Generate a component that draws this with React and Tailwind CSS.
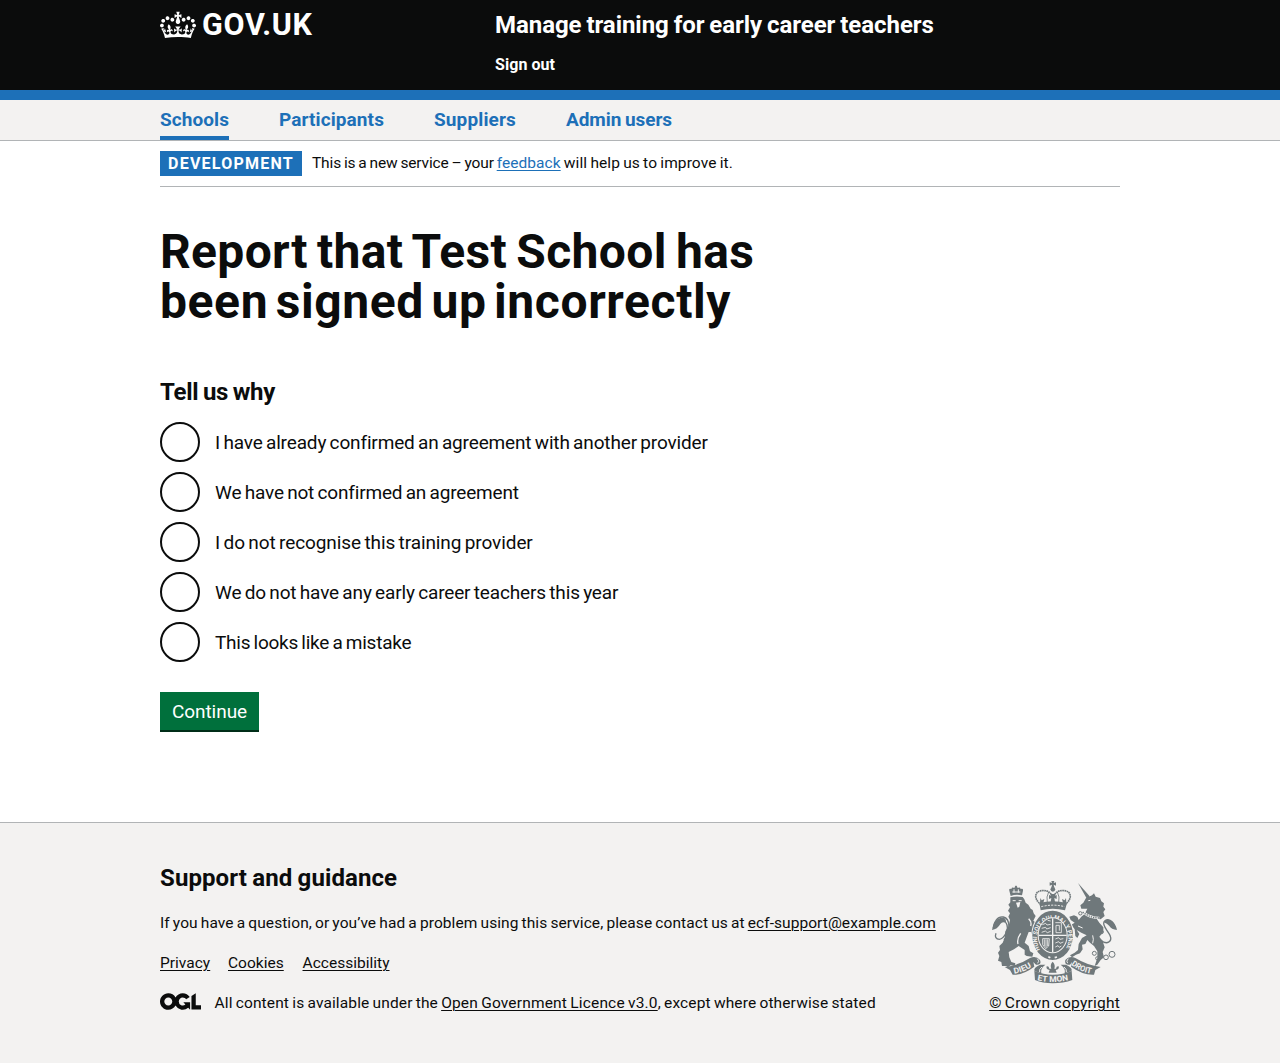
import React from "react";

function Crown() {
  return (
    <svg aria-hidden="true" viewBox="0 0 132 97" className="-mt-[2px] block h-[32px] w-[36px] shrink-0">
      <path
        fill="currentColor"
        fillRule="evenodd"
        d="M25 30.2c3.5 1.5 7.7-.2 9.1-3.7 1.5-3.6-.2-7.8-3.9-9.2-3.6-1.4-7.6.3-9.1 3.9-1.4 3.5.3 7.5 3.9 9zM9 39.5c3.6 1.5 7.8-.2 9.2-3.7 1.5-3.6-.2-7.8-3.9-9.1-3.6-1.5-7.6.2-9.1 3.8-1.4 3.5.3 7.5 3.8 9zM4.4 57.2c3.5 1.5 7.7-.2 9.1-3.8 1.5-3.6-.2-7.7-3.9-9.1-3.5-1.5-7.6.3-9.1 3.8-1.4 3.5.3 7.6 3.9 9.1zm38.3-21.4c3.5 1.5 7.7-.2 9.1-3.8 1.5-3.6-.2-7.7-3.9-9.1-3.6-1.5-7.6.3-9.1 3.8-1.3 3.6.4 7.7 3.9 9.1zm64.4-5.6c-3.6 1.5-7.8-.2-9.1-3.7-1.5-3.6.2-7.8 3.8-9.2 3.6-1.4 7.7.3 9.2 3.9 1.3 3.5-.4 7.5-3.9 9zm15.9 9.3c-3.6 1.5-7.7-.2-9.1-3.7-1.5-3.6.2-7.8 3.7-9.1 3.6-1.5 7.7.2 9.2 3.8 1.5 3.5-.3 7.5-3.8 9zm4.7 17.7c-3.6 1.5-7.8-.2-9.2-3.8-1.5-3.6.2-7.7 3.9-9.1 3.6-1.5 7.7.3 9.2 3.8 1.3 3.5-.4 7.6-3.9 9.1zM89.3 35.8c-3.6 1.5-7.8-.2-9.2-3.8-1.4-3.6.2-7.7 3.9-9.1 3.6-1.5 7.7.3 9.2 3.8 1.4 3.6-.3 7.7-3.9 9.1zM69.7 17.7l8.9 4.7V9.3l-8.9 2.8c-.2-.3-.5-.6-.9-.9L72.4 0H59.6l3.5 11.2c-.3.3-.6.5-.9.9l-8.8-2.8v13.1l8.8-4.7c.3.3.6.7.9.9l-5 15.4v.1c-.2.8-.4 1.6-.4 2.4 0 4.1 3.1 7.5 7 8.1h.2c.3 0 .7.1 1 .1.4 0 .7 0 1-.1h.2c4-.6 7.1-4.1 7.1-8.1 0-.8-.1-1.7-.4-2.4V34l-5.1-15.4c.4-.2.7-.6 1-.9zM66 92.8c16.9 0 32.8 1.1 47.1 3.2 4-16.9 8.9-26.7 14-33.5l-9.6-3.4c1 4.9 1.1 7.2 0 10.2-1.5-1.4-3-4.3-4.2-8.7L108.6 76c2.8-2 5-3.2 7.5-3.3-4.4 9.4-10 11.9-13.6 11.2-4.3-.8-6.3-4.6-5.6-7.9 1-4.7 5.7-5.9 8-.5 4.3-8.7-3-11.4-7.6-8.8 7.1-7.2 7.9-13.5 2.1-21.1-8 6.1-8.1 12.3-4.5 20.8-4.7-5.4-12.1-2.5-9.5 6.2 3.4-5.2 7.9-2 7.2 3.1-.6 4.3-6.4 7.8-13.5 7.2-10.3-.9-10.9-8-11.2-13.8 2.5-.5 7.1 1.8 11 7.3L80.2 60c-4.1 4.4-8 5.3-12.3 5.4 1.4-4.4 8-11.6 8-11.6H55.5s6.4 7.2 7.9 11.6c-4.2-.1-8-1-12.3-5.4l1.4 16.4c3.9-5.5 8.5-7.7 10.9-7.3-.3 5.8-.9 12.8-11.1 13.8-7.2.6-12.9-2.9-13.5-7.2-.7-5 3.8-8.3 7.1-3.1 2.7-8.7-4.6-11.6-9.4-6.2 3.7-8.5 3.6-14.7-4.6-20.8-5.8 7.6-5 13.9 2.2 21.1-4.7-2.6-11.9.1-7.7 8.8 2.3-5.5 7.1-4.2 8.1.5.7 3.3-1.3 7.1-5.7 7.9-3.5.7-9-1.8-13.5-11.2 2.5.1 4.7 1.3 7.5 3.3l-4.7-15.4c-1.2 4.4-2.7 7.2-4.3 8.7-1.1-3-.9-5.3 0-10.2l-9.5 3.4c5 6.9 9.9 16.7 14 33.5 14.8-2.1 30.8-3.2 47.7-3.2z"
      />
    </svg>
  );
}

function OglLogo() {
  return (
    <svg aria-hidden="true" viewBox="0 0 483.2 195.7" className="mt-[-4px] mr-[13.5px] block h-[17px] w-[41px] shrink-0">
      <path
        fill="currentColor"
        d="M421.5 142.8V.1l-50.7 32.3v161.1h112.4v-50.7zm-122.3-9.6A47.12 47.12 0 0 1 221 97.8c0-26 21.1-47.1 47.1-47.1 16.7 0 31.4 8.7 39.7 21.8l42.7-27.2A97.63 97.63 0 0 0 268.1 0c-36.5 0-68.3 20.1-85.1 49.7A98 98 0 0 0 97.8 0C43.9 0 0 43.9 0 97.8s43.9 97.8 97.8 97.8c36.5 0 68.3-20.1 85.1-49.7a97.76 97.76 0 0 0 149.6 25.4l19.4 22.2h3v-87.8h-80l24.3 27.5zM97.8 145c-26 0-47.1-21.1-47.1-47.1s21.1-47.1 47.1-47.1 47.1 21.1 47.1 47.1S123.8 145 97.8 145"
      />
    </svg>
  );
}

const INK = "#6f787b";
const PAPER = "#f3f2f1";

function RoyalArms() {
  return (
    <svg aria-hidden="true" viewBox="36 33 375 306" className="block h-[102px] w-[125px] overflow-visible">
      {/* lion */}
      <g fill={INK}>
        <path d="M92 78 L88 62 Q86 54 94 57 Q96 50 103 54 L106 47 h4 l3 7 Q120 50 122 57 Q130 54 129 62 L126 76 Q108 71 92 78z" />
        <path d="M91 82 Q108 77 128 81 L133 88 L137 98 L145 104 L152 116 L158 120 L161 130 L167 138 L160 152 L170 160 L174 170 L170 178 L163 174 L160 184 L170 190 L174 200 L168 208 L158 200 L154 186 L146 186 L140 202 L134 218 L146 228 L150 244 L160 250 L157 260 L140 258 L134 254 L134 240 L116 228 L102 238 L86 246 L88 262 L94 276 L106 280 L104 288 L92 286 L84 292 L78 288 L66 288 L64 276 L54 272 L58 258 L54 248 L60 240 L58 228 L68 218 L74 204 L76 184 L86 168 L90 150 L85 140 L90 130 L84 122 L90 112 L85 104 L91 97z" />
      </g>
      <path d="M72 210 C92 186 92 146 70 141 C52 138 42 156 40 174" fill="none" stroke={INK} strokeWidth="4" />
      <path d="M78 158 C90 178 72 206 58 208 C48 208 44 200 48 190" fill="none" stroke={INK} strokeWidth="4" />
      <path d="M36 180 Q40 148 62 143 Q80 140 78 160 Q68 152 61 162 Q52 178 36 180z" fill={INK} />
      <g fill="none" stroke={PAPER} strokeWidth="3">
        <path d="M97 66h24M102 58v10M115 58v10M98 92h9M116 92h9" />
        <path d="M122 190 Q110 206 114 222M146 146 Q156 156 152 168" strokeWidth="4" />
      </g>
      <path d="M108 98 l13 -2 -3 14 -5 3z" fill={PAPER} />

      {/* unicorn */}
      <g fill={INK}>
        <path d="M294 39 L329 79 L321 87z" />
        <path d="M318 84 L336 76 L342 70 L347 80 L360 84 L364 94 L372 100 L370 110 L376 118 L370 126 L374 138 L362 148 L350 146 L358 158 L370 172 L370 186 L358 200 L368 214 L374 232 L368 246 L372 262 L362 270 L352 284 L344 288 L352 264 L352 244 L342 228 L330 218 L322 210 L316 222 L306 224 L308 238 L300 250 L288 254 L276 262 L270 256 L284 248 L294 240 L296 222 L306 204 L320 196 L304 188 L290 180 L298 192 L292 204 L286 198 L284 178 L274 164 L284 158 L272 150 L268 140 L282 136 L292 140 L296 150 L304 140 L314 132 L322 116 L304 116 L301 106 L310 98z" />
      </g>
      <g fill="none" stroke={PAPER} strokeWidth="3">
        <path d="M325 92 l6 -1" />
        <path d="M308 126 Q330 144 358 144" strokeWidth="7" />
        <path d="M338 196 Q342 208 338 220" />
        <path d="M294 168 L308 174" />
      </g>
      <g fill="none" stroke={INK} strokeWidth="3">
        <path d="M308 126 Q330 144 358 144" strokeDasharray="4 3" strokeWidth="4" />
        <circle cx="301" cy="130" r="5" />
        <circle cx="365" cy="186" r="5" />
        <circle cx="343" cy="250" r="6" />
        <circle cx="352" cy="265" r="5" />
        <circle cx="378" cy="262" r="7" />
        <circle cx="396" cy="253" r="9" />
        <path d="M362 210 C380 226 398 216 390 196 C382 180 366 166 372 156 C380 142 400 150 408 176" strokeWidth="4" />
      </g>
      <path d="M370 156 Q378 144 392 152 Q406 160 411 180 Q394 178 388 168 Q382 160 370 156z" fill={INK} />

      {/* imperial crown */}
      <g fill={INK}>
        <path d="M214 33h9l-2 6 7-2v10l-7-3 2 9h-9l2-9-7 3V37l7 2z" />
        <circle cx="218.500" cy="58" r="7" />
        <path d="M178 99 Q218 88 261 99 L255 121 Q218 112 182 121z" />
        <path d="M213 77l-2-5h15l-2 5 6-2v12l-7-3 2 12h-13l2-12-7 3V75z" />
        <path d="M181 84l4 7 8-4-3 12h-10zM258 84l-4 7-8-4 3 12h10z" />
      </g>
      <g fill="none" stroke={INK} strokeWidth="5" strokeDasharray="5 1.500">
        <path d="M183 104 C158 84 166 64 184 62 C200 60 212 66 216 78" />
        <path d="M255 104 C280 84 272 64 254 62 C238 60 226 66 222 78" />
      </g>
      <path d="M206 66 Q198 80 202 98M232 66 Q240 80 236 98" fill="none" stroke={INK} strokeWidth="2.500" />
      <path d="M184 110 Q218 101 254 110" fill="none" stroke={PAPER} strokeWidth="3" strokeDasharray="6 4" />

      {/* garter and shield */}
      <ellipse cx="218" cy="196" rx="64" ry="77" fill={PAPER} />
      <ellipse cx="218" cy="196" rx="61" ry="74" fill={INK} />
      <path id="garter" d="M180 239 A47 57 0 1 1 256 239" fill="none" />
      <text fill={PAPER} fontSize="19" fontWeight="700" className="font-['Roboto']">
        <textPath href="#garter" textLength="228" lengthAdjust="spacingAndGlyphs">HONI SOIT QUI MAL Y PENSE</textPath>
      </text>
      <ellipse cx="218" cy="196" rx="45" ry="54" fill={PAPER} />
      <ellipse cx="218" cy="196" rx="42" ry="51" fill={INK} />
      <path d="M218 145v102M176 196h84" stroke={PAPER} strokeWidth="4" />
      <g fill="none" stroke={PAPER} strokeWidth="2.500">
        <path d="M187 164l10-4 4 5 11-2M185 175l12-3 3 5 12-4M185 187l11-4 6 5 10-4M203 151l9 2" />
        <path d="M226 158h18v30h-16v-22h10v16" />
        <path d="M188 206h20l-2 22-9 8-9-12zM193 208v20M198 208v24M203 208v20" />
        <path d="M226 207l10-4 4 5 10-2M226 219l10-4 4 5 10-4M226 231l8-4 4 5 6-4" />
        <path d="M205 260l6 3M224 263l7-2" strokeWidth="5" />
      </g>

      {/* motto ribbon and fleur */}
      <g fill={INK}>
        <path d="M74 291 Q116 286 150 264 Q168 256 180 270 Q186 286 168 284 L160 276 L163 290 Q128 316 98 314 L90 300z" />
        <path d="M362 291 Q322 286 286 264 Q268 256 256 270 Q252 286 270 284 L276 276 L273 290 Q310 316 342 314 L346 300z" />
        <path d="M163 303 Q190 314 218 314 Q250 314 275 303 L277 330 Q250 340 218 340 Q188 340 165 330z" />
        <path d="M164 304 Q158 294 180 284 L196 284 Q180 296 184 310zM274 304 Q280 294 258 284 L242 284 Q258 296 254 310z" />
        <path d="M218 275q-9 9-4 21h-6q-1-8-8-7-3 10 9 11l-3 8h24l-3-8q12-1 9-11-7-1-8 7h-5q4-12-5-21z" />
      </g>
      <path d="M172 266 Q180 276 172 279M265 266 Q257 276 264 279M186 291 Q176 298 179 306M252 291 Q261 298 259 306" fill="none" stroke={PAPER} strokeWidth="3" />
      <path id="dieu" d="M103 311 Q132 307 163 286" fill="none" />
      <path id="droit" d="M273 284 Q302 307 340 312" fill="none" />
      <path id="etmon" d="M172 331 Q218 341 268 330" fill="none" />
      <g fill={PAPER} fontWeight="700" fontSize="24" className="font-['Roboto']">
        <text><textPath href="#dieu" textLength="56" lengthAdjust="spacingAndGlyphs">DIEU</textPath></text>
        <text><textPath href="#droit" textLength="66" lengthAdjust="spacingAndGlyphs">DROIT</textPath></text>
        <text><textPath href="#etmon" textLength="94" lengthAdjust="spacingAndGlyphs">ET MON</textPath></text>
      </g>
    </svg>
  );
}

const NAV = [
  { label: "Schools", active: true, cls: "w-[69px] tracking-[0.07px]" },
  { label: "Participants", cls: "w-[105px] tracking-[0.1px]" },
  { label: "Suppliers", cls: "w-[82px] tracking-[0.13px]" },
  { label: "Admin users", cls: "w-[106px] tracking-[-0.06px] [word-spacing:-1px]" },
];

const REASONS = [
  { text: "I have already confirmed an agreement with another provider", cls: "tracking-[-0.15px]" },
  { text: "We have not confirmed an agreement", cls: "tracking-[-0.17px]" },
  { text: "I do not recognise this training provider", cls: "tracking-[-0.09px]" },
  { text: "We do not have any early career teachers this year", cls: "tracking-[-0.15px]" },
  { text: "This looks like a mistake", cls: "tracking-[-0.24px]" },
];

const LINK = "underline decoration-1 underline-offset-[2px]";

export default function App() {
  return (
    <div className="flex min-h-[1063px] flex-col bg-white font-['Roboto',sans-serif] text-[#0b0c0c] antialiased">
      <header className="h-[100px] border-b-[10px] border-[#1d70b8] bg-[#0b0c0c] text-white">
        <div className="mx-auto flex w-[960px]">
          <a href="#" className="flex h-[50px] w-[335px] pt-[11px]">
            <Crown />
            <span className="ml-[6px] -mt-[1px] text-[30.5px] leading-[30px] font-bold tracking-[0.7px]">GOV.UK</span>
          </a>
          <div>
            <a href="#" className="mt-[10px] block text-[24px] leading-[30px] font-bold tracking-[-0.05px] whitespace-nowrap [word-spacing:-1px]">
              Manage training for early career teachers
            </a>
            <a href="#" className="mt-[15px] block text-[16px] leading-[20px] font-bold tracking-[0.05px]">Sign out</a>
          </div>
        </div>
      </header>

      <nav className="h-[41px] border-b border-[#b1b4b6] bg-[#f3f2f1]">
        <ul className="mx-auto flex h-[40px] w-[960px] gap-[50px]">
          {NAV.map((item) => (
            <li key={item.label} className={item.active ? "border-b-4 border-[#1d70b8]" : ""}>
              <a href="#" className={`block text-[19px] leading-[40px] font-bold whitespace-nowrap text-[#1d70b8] ${item.cls}`}>
                {item.label}
              </a>
            </li>
          ))}
        </ul>
      </nav>

      <div className="mx-auto flex h-[46px] w-[960px] items-start border-b border-[#b1b4b6] pt-[10px]">
        <strong className="mr-[10px] block h-[25px] w-[142px] bg-[#1d70b8] pl-2 text-[16px] leading-[25px] font-bold tracking-[1.24px] text-white">
          DEVELOPMENT
        </strong>
        <p className="text-[15.5px] leading-[25px] whitespace-pre [word-spacing:-0.8px]">
          <span className="tracking-[-0.14px]">This is a new service – your </span>
          <a href="#" className={`text-[#1d70b8] tracking-[0.06px] ${LINK}`}>feedback</a>
          <span className="tracking-[0.11px]"> will help us to improve it.</span>
        </p>
      </div>

      <main className="mx-auto w-[960px] flex-1 pt-[40px]">
        <h1 className="text-[48px] leading-[50px] font-bold whitespace-nowrap">
          <span className="block tracking-[0.33px] [word-spacing:-3px]">Report that Test School has</span>
          <span className="block tracking-[0.6px] [word-spacing:-5px]">been signed up incorrectly</span>
        </h1>
        <form className="mt-[49px]" onSubmit={(e) => e.preventDefault()}>
          <fieldset>
            <legend className="h-[30px] text-[24px] leading-[32px] font-bold tracking-[-0.3px] [word-spacing:-1px]">Tell us why</legend>
            <div className="mt-[16px] flex flex-col gap-[10px]">
              {REASONS.map((reason) => (
                <label key={reason.text} className={`flex h-[40px] items-center gap-[15px] text-[19px] leading-[25px] [word-spacing:-1.2px] ${reason.cls}`}>
                  <input type="radio" name="reason" className="h-[40px] w-[40px] shrink-0 appearance-none rounded-full border-2 border-[#0b0c0c] bg-white" />
                  {reason.text}
                </label>
              ))}
            </div>
          </fieldset>
          <button type="submit" className="mt-[30px] block h-[38px] w-[99px] bg-[#00703c] text-center text-[19px] leading-[39px] tracking-[-0.05px] text-white shadow-[0_2px_0_#002d18]">
            Continue
          </button>
        </form>
      </main>

      <footer className="h-[241px] border-t border-[#b1b4b6] bg-[#f3f2f1] text-[15.5px] leading-[20px]">
        <div className="mx-auto flex w-[960px] justify-between">
          <div className="pt-[40px] whitespace-pre [word-spacing:-0.8px]">
            <h2 className="text-[24px] leading-[30px] font-bold tracking-[0.1px]">Support and guidance</h2>
            <p className="mt-[20px] tracking-[0.075px]">
              If you have a question, or you’ve had a problem using this service, please contact us at{" "}
              <a href="#" className={`tracking-[0.06px] ${LINK}`}>ecf-support@example.com</a>
            </p>
            <ul className="mt-[20px] flex gap-[18px] tracking-[0.02px]">
              <li className="w-[50px]"><a href="#" className={LINK}>Privacy</a></li>
              <li className="w-[56.5px]"><a href="#" className={LINK}>Cookies</a></li>
              <li><a href="#" className={LINK}>Accessibility</a></li>
            </ul>
            <div className="mt-[20px] flex items-center">
              <OglLogo />
              <p className="tracking-[0.13px]">
                All content is available under the <a href="#" className={`tracking-[0.17px] ${LINK}`}>Open Government Licence v3.0</a>, except where otherwise stated
              </p>
            </div>
          </div>
          <div className="flex flex-col items-end pt-[58px]">
            <div className="pr-[3px]"><RoyalArms /></div>
            <a href="#" className={`mt-[10px] [word-spacing:-0.8px] tracking-[0.24px] ${LINK}`}>© Crown copyright</a>
          </div>
        </div>
      </footer>
    </div>
  );
}
